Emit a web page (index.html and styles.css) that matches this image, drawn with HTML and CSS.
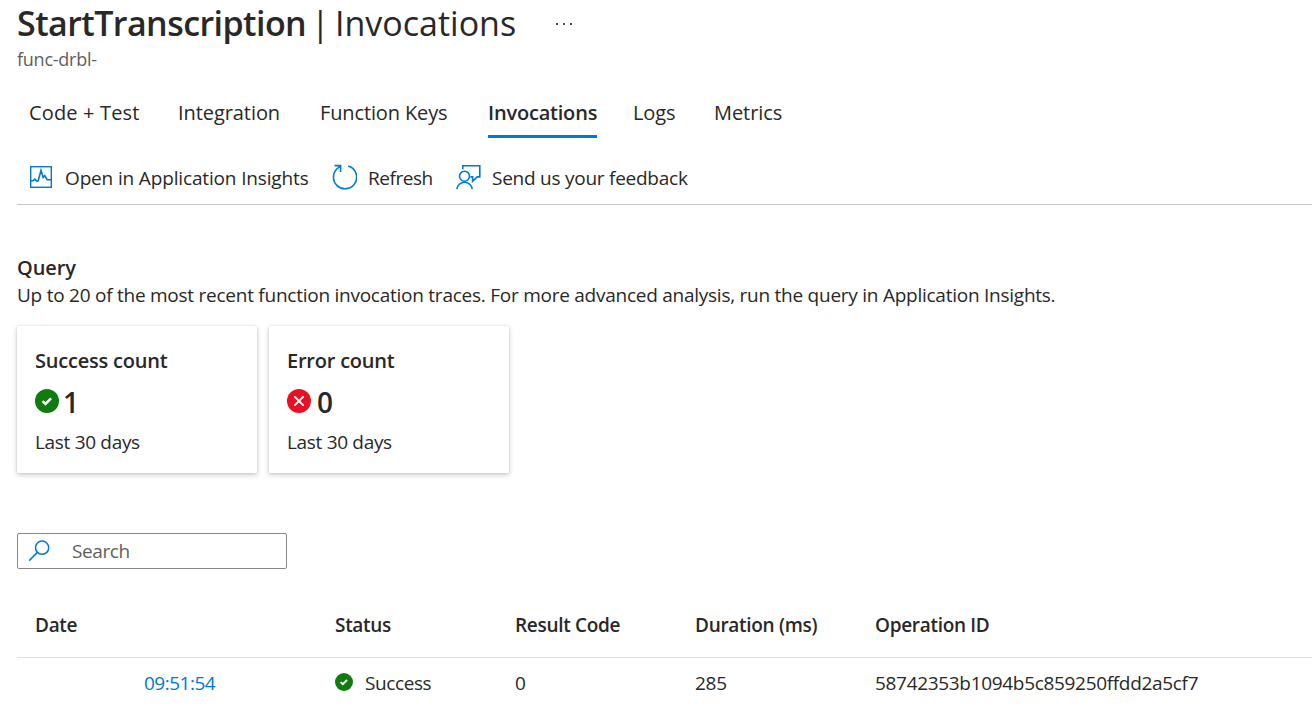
FILE: index.html
```html
<!DOCTYPE html>
<html lang="en">
<head>
<meta charset="utf-8">
<title>StartTranscription | Invocations</title>
<link rel="stylesheet" href="styles.css">
</head>
<body>
<svg class="defs" width="0" height="0" aria-hidden="true">
  <symbol id="ok" viewBox="0 0 24 24"><circle cx="12" cy="12" r="12" fill="#107c10"/><path d="M7.5 12.2l2.9 2.7 5.7-5.6" fill="none" stroke="#fff" stroke-width="2.5"/></symbol>
  <symbol id="bad" viewBox="0 0 24 24"><circle cx="12" cy="12" r="12" fill="#e81123"/><path d="M7.9 7.9l8.2 8.2M16.1 7.9l-8.2 8.2" fill="none" stroke="#fff" stroke-width="1.9" stroke-linecap="round"/></symbol>
</svg>
<header class="header">
  <h1 class="title"><span class="title-name">StartTranscription</span><span class="title-bar">|</span><span class="title-page">Invocations</span>
    <svg class="more" width="20" height="4" viewBox="0 0 20 4" fill="#484644"><rect x="1" y="1" width="2" height="2"/><rect x="8" y="1" width="2" height="2"/><rect x="15" y="1" width="2" height="2"/></svg>
  </h1>
  <div class="subtitle">func-drbl-</div>
</header>
<nav class="tabs">
  <a class="tab tab-code">Code + Test</a>
  <a class="tab">Integration</a>
  <a class="tab tab-keys">Function Keys</a>
  <a class="tab tab-active">Invocations</a>
  <a class="tab">Logs</a>
  <a class="tab">Metrics</a>
</nav>
<div class="commands">
  <div class="command"><svg width="26" height="26" viewBox="0 0 26 26" fill="none" stroke="#0078d4"><rect x="2.7" y="2.7" width="20.6" height="20.6" stroke-width="1.4"/><path d="M3 16.8h2l1.8-1.6 2.2 2.2 1.2-.6L13 6.4l2.2 7 1.5-1.7 2.5 4h4" stroke-width="1.6"/></svg><span class="open">Open in Application Insights</span></div>
  <div class="command"><svg width="26" height="26" viewBox="0 0 26 26" fill="none" stroke="#0078d4" stroke-width="1.6"><path d="M17.2 2A11.6 11.6 0 1 1 7.8 3.4L9.6 2M3.6 1.6h6v6.4"/></svg><span class="refresh">Refresh</span></div>
  <div class="command"><svg width="26" height="26" viewBox="0 0 26 26" fill="none" stroke="#0078d4" stroke-width="1.6"><path d="M7.8 5.3V1.7h17v11.2h-2.5l-4.7 4.3v-4.3h-2.2"/><circle cx="9.5" cy="12.2" r="5"/><path d="M1.8 25.2a7.8 7.8 0 0 1 15.5 0"/></svg><span class="feedback">Send us your feedback</span></div>
</div>
<main class="main">
  <h2 class="query-title">Query</h2>
  <p class="query-text">Up to 20 of the most recent function invocation traces. For more advanced analysis, run the query in Application Insights.</p>
  <section class="cards">
    <article class="card"><h3 class="card-title">Success count</h3><div class="count"><svg width="24" height="24"><use href="#ok"/></svg><span class="one">1</span></div><div class="period">Last 30 days</div></article>
    <article class="card"><h3 class="card-title">Error count</h3><div class="count"><svg width="24" height="24"><use href="#bad"/></svg><span>0</span></div><div class="period">Last 30 days</div></article>
  </section>
  <div class="search"><svg width="22" height="22" viewBox="0 0 22 22" fill="none" stroke="#0078d4" stroke-width="1.5"><circle cx="14.1" cy="7.7" r="6.6"/><path d="M9.4 12.4L1.2 20.6"/></svg><span>Search</span></div>
  <div class="table">
    <div class="row head"><span>Date</span><span>Status</span><span>Result Code</span><span>Duration (ms)</span><span>Operation ID</span></div>
    <div class="row"><a class="time">09:51:54</a><span class="status"><svg width="18" height="18"><use href="#ok"/></svg><span>Success</span></span><span>0</span><span>285</span><span class="operation">58742353b1094b5c859250ffdd2a5cf7</span></div>
  </div>
</main>
</body>
</html>
```
FILE: styles.css
```css
* { box-sizing: border-box; }
body { margin: 0; height: 718px; overflow: hidden; background: #fff; color: #292827; font: 19px/26px "Open Sans", "Noto Sans", sans-serif; letter-spacing: -.25px; white-space: nowrap; }
h1, h2, h3, p { margin: 0; font-size: inherit; font-weight: 600; }
svg { flex: none; display: block; }
.defs { position: absolute; }
.header { height: 92px; padding-left: 17px; }
.title { display: grid; grid-template-columns: 294px 24px 220px 20px; height: 46px; line-height: 46px; font-size: 34px; letter-spacing: 0; }
.title-name { letter-spacing: -.56px; }
.title-bar, .title-page { font-weight: 400; }
.more { margin-top: 22px; }
.subtitle { color: #605e5c; font-size: 18px; line-height: 26px; letter-spacing: -.25px; }
.tabs { display: grid; grid-template-columns: 149px 142px 168px 145px 81px 100px; height: 46px; padding-left: 29px; font-size: 20px; letter-spacing: -.07px; }
.tab { padding-top: 8px; }
.tab-code { letter-spacing: .15px; }
.tab-keys { letter-spacing: -.13px; }
.tab-active { width: 109px; height: 46px; border-bottom: 3px solid #0078d4; font-weight: 600; letter-spacing: -.2px; }
.commands { display: grid; grid-template-columns: 303px 124px 300px; height: 67px; margin-left: 17px; padding: 26px 0 0 11px; border-bottom: 1px solid #c8c6c4; }
.command { display: flex; gap: 11px; height: 27px; }
.command span { padding-top: 1px; }
.open { letter-spacing: -.15px; }
.refresh { letter-spacing: -.45px; }
.main { padding: 49px 0 0 17px; }
.query-title { line-height: 27px; font-size: 20px; letter-spacing: -.1px; }
.query-text { font-weight: 400; line-height: 29px; }
.cards { display: flex; gap: 12px; margin-top: 16px; }
.card { width: 240px; height: 147px; padding: 22px 18px; box-shadow: 0 2px 5px rgba(0,0,0,.2), 0 0 2px rgba(0,0,0,.12); }
.card-title { font-size: 20px; letter-spacing: -.22px; }
.count { display: flex; gap: 6px; height: 36px; margin-top: 9px; font-size: 28px; line-height: 38px; font-weight: 600; }
.count svg { margin-top: 6px; }
.one { margin-left: -2px; }
.period { margin-top: 10px; letter-spacing: -.32px; }
.search { display: flex; gap: 22px; width: 270px; height: 36px; margin-top: 60px; padding: 5px 10px; border: 1px solid #8a8886; border-radius: 2px; color: #605e5c; letter-spacing: -.4px; }
.search svg { margin-top: 1px; }
.search span { line-height: 24px; }
.table { margin-top: 31px; }
.row { display: grid; grid-template-columns: 300px 180px 180px 180px 1fr; height: 60px; padding: 12px 0 0 18px; }
.head { height: 58px; border-bottom: 1px solid #e1dfdd; font-weight: 600; letter-spacing: -.3px; }
.time { padding-left: 109px; color: #0078d4; letter-spacing: -.5px; }
.operation { letter-spacing: -.32px; }
.status { display: flex; gap: 12px; letter-spacing: -.4px; }
.status svg { margin-top: 3px; }
```
